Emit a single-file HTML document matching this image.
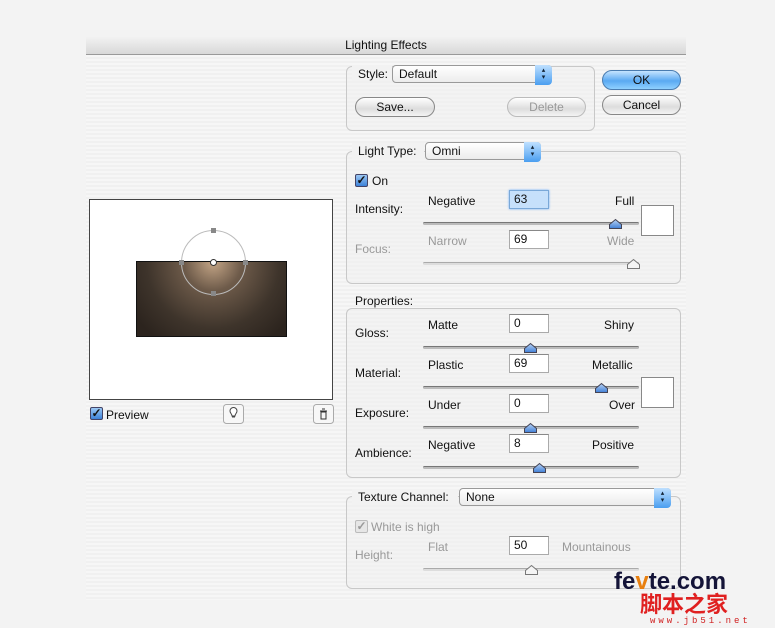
<!DOCTYPE html>
<html><head><style>
*{margin:0;padding:0;box-sizing:border-box}
body{width:775px;height:628px;background:#f3f3f3;position:relative;overflow:hidden;font-family:"Liberation Sans",sans-serif;font-size:12px;color:#111}
.a{position:absolute;white-space:nowrap}
#dlg{position:absolute;left:86px;top:37px;width:600px;height:563px;background:repeating-linear-gradient(#f0f0f0 0 2px,#f6f6f6 2px 4px)}
#tb{position:absolute;left:86px;top:37px;width:600px;height:18px;background:linear-gradient(#f2f2f2,#d8d8d8);border-bottom:1px solid #999;text-align:center;line-height:17px;font-size:12px}
.grp{position:absolute;border:1px solid #c8c8c8;border-radius:6px;background:rgba(240,240,240,.4)}
.pop{position:absolute;height:18px;border:1px solid #999;border-radius:4px;background:linear-gradient(#fff,#ececec);padding-left:6px;line-height:16px;font-size:12px}
.pop:after{content:"▴\A▾";white-space:pre;position:absolute;right:-1px;top:-1px;width:17px;height:18px;border-radius:0 4px 4px 0;background:linear-gradient(#bfe0ff,#4a9ef0);font-size:7px;line-height:7px;text-align:center;padding-top:2px;color:#123}
.btn{position:absolute;height:20px;border:1px solid #888;border-radius:10px;background:linear-gradient(#fff,#ddd 60%,#f4f4f4);text-align:center;line-height:18px;font-size:12px}
.inp{position:absolute;width:40px;height:19px;background:#fff;border:1px solid #aaa;border-top-color:#888;padding-left:4px;line-height:17px;font-size:12px}
.trk{position:absolute;height:3px;width:216px;border-radius:2px;background:#bbb;border-top:1px solid #777}
.g{color:#999}
.sw{position:absolute;width:33px;height:31px;background:#fff;border:1px solid #888}
.cb{position:absolute;width:13px;height:13px;border:1px solid #446;border-radius:2px;background:linear-gradient(#9cc8f4,#3d82d8);color:#111;font-size:12px;line-height:11px;text-align:center;font-weight:bold}
</style></head><body>
<div id="dlg"></div>
<div id="tb">Lighting Effects</div>

<div class="grp" style="left:346px;top:66px;width:249px;height:65px"></div>
<div class="a" style="left:352px;top:65px;width:40px;height:16px;background:#f2f2f2"></div>
<div class="a" style="left:358px;top:67px">Style:</div>
<div class="pop" style="left:392px;top:65px;width:160px">Default</div>
<div class="btn" style="left:355px;top:97px;width:80px">Save...</div>
<div class="btn g" style="left:507px;top:97px;width:79px;border-color:#bbb">Delete</div>
<div class="btn" style="left:602px;top:70px;width:79px;background:linear-gradient(#c5e4ff,#5aa9f2 55%,#8fd0ff);border-color:#4a7cb0">OK</div>
<div class="btn" style="left:602px;top:95px;width:79px">Cancel</div>

<div class="grp" style="left:346px;top:151px;width:335px;height:133px"></div>
<div class="a" style="left:352px;top:143px;width:72px;height:16px;background:#f2f2f2"></div>
<div class="a" style="left:358px;top:144px">Light Type:</div>
<div class="pop" style="left:425px;top:142px;width:116px">Omni</div>
<div class="cb" style="left:355px;top:174px">✓</div>
<div class="a" style="left:372px;top:174px">On</div>
<div class="a" style="left:355px;top:202px">Intensity:</div>
<div class="a" style="left:428px;top:194px">Negative</div>
<div class="inp" style="left:509px;top:190px;background:#c6e0fb;border-color:#7aa8d8;box-shadow:0 0 2px #6af">63</div>
<div class="a" style="left:615px;top:194px">Full</div>
<div class="trk" style="left:423px;top:222px"></div>
<div class="sw" style="left:641px;top:205px"></div>
<div class="a g" style="left:355px;top:242px">Focus:</div>
<div class="a g" style="left:428px;top:234px">Narrow</div>
<div class="inp" style="left:509px;top:230px">69</div>
<div class="a g" style="left:607px;top:234px">Wide</div>
<div class="trk" style="left:423px;top:262px;background:#ddd;border-top-color:#aaa"></div>

<div class="a" style="left:355px;top:294px">Properties:</div>
<div class="grp" style="left:346px;top:308px;width:335px;height:170px"></div>
<div class="a" style="left:355px;top:326px">Gloss:</div>
<div class="a" style="left:428px;top:318px">Matte</div>
<div class="inp" style="left:509px;top:314px">0</div>
<div class="a" style="left:604px;top:318px">Shiny</div>
<div class="trk" style="left:423px;top:346px"></div>
<div class="a" style="left:355px;top:366px">Material:</div>
<div class="a" style="left:428px;top:358px">Plastic</div>
<div class="inp" style="left:509px;top:354px">69</div>
<div class="a" style="left:592px;top:358px">Metallic</div>
<div class="trk" style="left:423px;top:386px"></div>
<div class="sw" style="left:641px;top:377px"></div>
<div class="a" style="left:355px;top:406px">Exposure:</div>
<div class="a" style="left:428px;top:398px">Under</div>
<div class="inp" style="left:509px;top:394px">0</div>
<div class="a" style="left:609px;top:398px">Over</div>
<div class="trk" style="left:423px;top:426px"></div>
<div class="a" style="left:355px;top:446px">Ambience:</div>
<div class="a" style="left:428px;top:438px">Negative</div>
<div class="inp" style="left:509px;top:434px">8</div>
<div class="a" style="left:592px;top:438px">Positive</div>
<div class="trk" style="left:423px;top:466px"></div>

<div class="grp" style="left:346px;top:496px;width:335px;height:93px"></div>
<div class="a" style="left:352px;top:489px;width:106px;height:16px;background:#f2f2f2"></div>
<div class="a" style="left:358px;top:490px">Texture Channel:</div>
<div class="pop" style="left:459px;top:488px;width:212px">None</div>
<div class="cb" style="left:355px;top:520px;background:#e6e6e6;border-color:#bbb;color:#999">✓</div>
<div class="a g" style="left:371px;top:520px">White is high</div>
<div class="a g" style="left:355px;top:548px">Height:</div>
<div class="a g" style="left:428px;top:540px">Flat</div>
<div class="inp" style="left:509px;top:536px">50</div>
<div class="a g" style="left:562px;top:540px">Mountainous</div>
<div class="trk" style="left:423px;top:568px;background:#ddd;border-top-color:#aaa"></div>

<svg class="a" style="left:0;top:0" width="775" height="628">
<defs><linearGradient id="tg" x1="0" y1="0" x2="0" y2="1"><stop offset="0" stop-color="#bcd4f4"/><stop offset="1" stop-color="#3f7fd6"/></linearGradient>
<radialGradient id="lg" cx="213" cy="262" r="95" gradientUnits="userSpaceOnUse"><stop offset="0" stop-color="#c4a586"/><stop offset=".3" stop-color="#6e5b4a"/><stop offset=".7" stop-color="#3e342b"/><stop offset="1" stop-color="#2c241e"/></radialGradient></defs>
<g stroke="#445" stroke-width="1">
<path d="M609.5 228.5v-4l6-5 6 5v4z" fill="url(#tg)"/>
<path d="M524.5 352.5v-4l6-5 6 5v4z" fill="url(#tg)"/>
<path d="M595.5 392.5v-4l6-5 6 5v4z" fill="url(#tg)"/>
<path d="M524.5 432.5v-4l6-5 6 5v4z" fill="url(#tg)"/>
<path d="M533.5 472.5v-4l6-5 6 5v4z" fill="url(#tg)"/>
</g>
<g stroke="#777" fill="#f4f4f4">
<path d="M627.5 268.5v-4l6-5 6 5v4z"/>
<path d="M525.5 574.5v-4l6-5 6 5v4z"/>
</g>
<rect x="89.5" y="199.5" width="243" height="200" fill="#fff" stroke="#444"/>
<rect x="136.5" y="261.5" width="150" height="75" fill="url(#lg)" stroke="#111"/>
<circle cx="213.5" cy="262.5" r="32" fill="none" stroke="#bbb"/>
<g fill="#888"><rect x="211" y="228" width="5" height="5"/><rect x="211" y="291" width="5" height="5"/><rect x="179" y="260" width="5" height="5"/><rect x="243" y="260" width="5" height="5"/></g>
<circle cx="213.5" cy="262.5" r="3" fill="#fff" stroke="#333"/>
<rect x="223.5" y="404.5" width="20" height="19" rx="3" fill="#f7f7f7" stroke="#aaa"/>
<path d="M230 411a3.5 3.5 0 1 1 7 0c0 2-2 3-2 5h-3c0-2-2-3-2-5zM232 417h3" fill="#fff" stroke="#444"/>
<rect x="313.5" y="404.5" width="20" height="19" rx="3" fill="#f7f7f7" stroke="#aaa"/>
<path d="M320 411h7M321 412h5v7h-5zM322 409h3" fill="none" stroke="#333"/>
<text x="614" y="589" font-family="Liberation Sans" font-weight="bold" font-size="24" fill="#141438">fe<tspan fill="#e88010">v</tspan>te.com</text>
<text x="640" y="612" font-family="Noto Sans CJK SC" font-weight="bold" font-size="22" fill="#e02020">脚本之家</text>
<text x="650" y="623" font-family="Liberation Mono" font-size="9" fill="#d02020" letter-spacing="3">www.jb51.net</text>
</svg>
<div class="cb" style="left:90px;top:407px">✓</div>
<div class="a" style="left:106px;top:408px">Preview</div>
</body></html>
